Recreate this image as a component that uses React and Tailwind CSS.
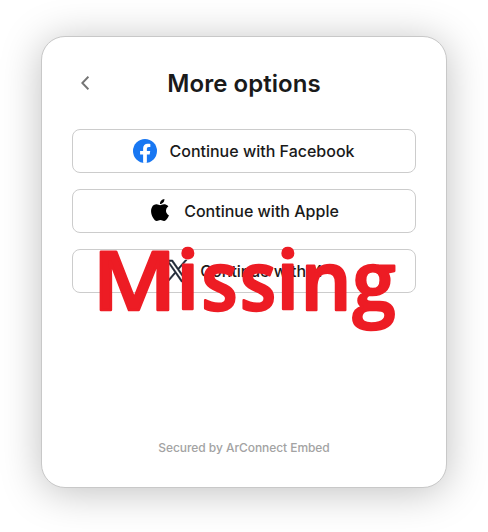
function FacebookIcon() {
  return (
    <svg viewBox="0 0 24 24" className="size-6 shrink-0">
      <circle cx="12" cy="12" r="12" fill="#1877f2" />
      <path
        d="M16.67 15.47 17.2 12h-3.33V9.75c0-.95.47-1.87 1.96-1.87h1.51V4.92s-1.37-.23-2.69-.23c-2.74 0-4.53 1.66-4.53 4.67V12H7.08v3.47h3.04v8.38a12.1 12.1 0 0 0 3.75 0v-8.38z"
        fill="#fff"
      />
    </svg>
  );
}

function AppleIcon() {
  return (
    <svg viewBox="0 0 24 24" className="mb-0.5 h-[22px] w-[22px] shrink-0" fill="#000">
      <path d="M12.152 6.896c-.948 0-2.415-1.078-3.96-1.04-2.04.027-3.91 1.183-4.961 3.014-2.117 3.675-.546 9.103 1.519 12.09 1.013 1.454 2.208 3.09 3.792 3.039 1.52-.065 2.09-.987 3.935-.987 1.831 0 2.35.987 3.96.948 1.637-.026 2.676-1.48 3.676-2.948 1.156-1.688 1.636-3.325 1.662-3.415-.039-.013-3.182-1.221-3.22-4.857-.026-3.04 2.48-4.494 2.597-4.559-1.429-2.09-3.623-2.324-4.39-2.376-2-.156-3.675 1.09-4.61 1.09zM15.53 3.83c.843-1.012 1.4-2.427 1.245-3.83-1.207.052-2.662.805-3.532 1.818-.78.896-1.454 2.338-1.273 3.714 1.338.104 2.715-.688 3.559-1.701" />
    </svg>
  );
}

function XIcon() {
  return (
    <svg
      viewBox="0 0 1200 1227"
      className="h-[22px] w-[22px] shrink-0 overflow-visible"
      fill="#1f2937"
      stroke="#1f2937"
      strokeWidth="32"
    >
      <path d="M714.163 519.284 1160.89 0h-105.86L667.137 450.887 357.328 0H0l468.492 681.821L0 1226.37h105.866l409.625-476.152 327.181 476.152H1200L714.137 519.284h.026ZM569.165 687.828l-47.468-67.894-377.686-540.24h162.604l304.797 435.991 47.468 67.894 396.2 566.721H892.476L569.165 687.854v-.026Z" />
    </svg>
  );
}

function OptionButton({ icon, gap, children }) {
  return (
    <button
      className={`flex h-11 w-full items-center justify-center rounded-lg border border-[#cccccc] bg-white text-[16px] font-medium text-[#1a1a1a] ${gap}`}
    >
      {icon}
      <span className="whitespace-nowrap">{children}</span>
    </button>
  );
}

export default function App() {
  return (
    <div className="relative h-[532px] w-[488px] overflow-hidden bg-white pl-[41px] pt-9 font-['Inter',sans-serif]">
      <main className="flex h-[452px] w-[406px] flex-col rounded-3xl border border-[#c8c8c8] bg-white px-[30px] shadow-[0_4px_40px_rgba(0,0,0,0.25)]">
        <header className="mt-[31px] flex h-8 items-center">
          <button className="flex w-[26px] justify-center pb-0.5" aria-label="Back">
            <svg viewBox="0 0 8 14" className="h-[14px] w-2" fill="none" stroke="#757575" strokeWidth="2">
              <path d="M7.4.7 1.3 7l6.1 6.3" />
            </svg>
          </button>
          <h1 className="mr-[26px] flex-1 text-center text-2xl font-semibold tracking-[0.05px] text-[#1a1a1a]">
            More options
          </h1>
        </header>
        <div className="mt-[29px] flex flex-col gap-4">
          <OptionButton icon={<FacebookIcon />} gap="gap-3">
            Continue with Facebook
          </OptionButton>
          <OptionButton icon={<AppleIcon />} gap="gap-[13px]">
            Continue with Apple
          </OptionButton>
          <OptionButton icon={<XIcon />} gap="gap-3">
            Continue with X
          </OptionButton>
        </div>
        <footer className="mt-auto mb-[31px] text-center text-xs leading-4 font-medium tracking-[-0.06px] text-[#a3a3a3]">
          Secured by ArConnect Embed
        </footer>
      </main>
      <svg className="pointer-events-none absolute inset-0 h-[532px] w-[488px]" viewBox="0 0 488 532">
        <text
          y="310"
          className="font-['Open_Sans',sans-serif] text-[81px] font-semibold"
          fill="#ed1c24"
          stroke="#ed1c24"
          strokeWidth="2.5"
          strokeLinejoin="round"
        >
          <tspan x="92.5" textLength="84" lengthAdjust="spacingAndGlyphs">M</tspan>
          <tspan x="176.5">i</tspan>
          <tspan x="201.5" textLength="36" lengthAdjust="spacingAndGlyphs">s</tspan>
          <tspan x="240" textLength="36" lengthAdjust="spacingAndGlyphs">s</tspan>
          <tspan x="276.5">i</tspan>
          <tspan x="300.5" textLength="51" lengthAdjust="spacingAndGlyphs">n</tspan>
          <tspan x="352.5" textLength="43" lengthAdjust="spacingAndGlyphs">g</tspan>
        </text>
      </svg>
    </div>
  );
}
